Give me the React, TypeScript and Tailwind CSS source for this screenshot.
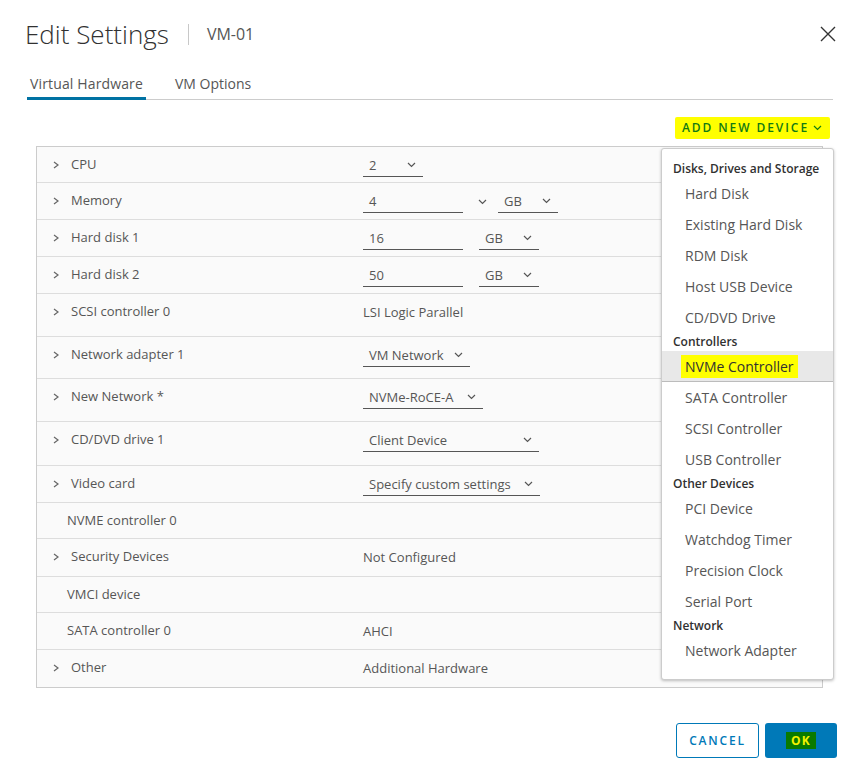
import React from 'react';

type Row = {
  label: string;
  h: number;
  expandable?: boolean;
  value?: React.ReactNode;
};

const ChevronRight = () => (
  <svg width="6" height="8" viewBox="0 0 6 8" className="shrink-0">
    <polyline points="1,1 5,4 1,7" fill="none" stroke="#666" strokeWidth="1.2" />
  </svg>
);

const ChevronDown = ({ color = '#565656' }: { color?: string }) => (
  <svg width="9" height="6" viewBox="0 0 9 6" className="shrink-0">
    <polyline points="1,1 4.5,4.5 8,1" fill="none" stroke={color} strokeWidth="1.2" />
  </svg>
);

// underlined select, value on the left and caret at the right edge
const Select: React.FC<{ text: string; w: string }> = ({ text, w }) => (
  <div className={`${w} flex items-center justify-between border-b border-[#565656] pl-[6px] pr-[7px] leading-[22px]`}>
    <span>{text}</span>
    <ChevronDown />
  </div>
);

const Input: React.FC<{ text: string }> = ({ text }) => (
  <div className="w-[100px] border-b border-[#565656] pl-[6px] leading-[22px]">{text}</div>
);

const rows: Row[] = [
  { label: 'CPU', h: 36, expandable: true, value: <Select text="2" w="w-[60px]" /> },
  {
    label: 'Memory',
    h: 37,
    expandable: true,
    value: (
      <div className="flex items-center">
        <Input text="4" />
        <div className="ml-[15px] mr-[11px] mt-[1px]">
          <ChevronDown />
        </div>
        <Select text="GB" w="w-[60px]" />
      </div>
    ),
  },
  {
    label: 'Hard disk 1',
    h: 37,
    expandable: true,
    value: (
      <div className="flex items-center gap-[16px]">
        <Input text="16" />
        <Select text="GB" w="w-[60px]" />
      </div>
    ),
  },
  {
    label: 'Hard disk 2',
    h: 37,
    expandable: true,
    value: (
      <div className="flex items-center gap-[16px]">
        <Input text="50" />
        <Select text="GB" w="w-[60px]" />
      </div>
    ),
  },
  { label: 'SCSI controller 0', h: 43, expandable: true, value: <span className="leading-[22px]">LSI Logic Parallel</span> },
  { label: 'Network adapter 1', h: 42, expandable: true, value: <Select text="VM Network" w="w-[107px]" /> },
  { label: 'New Network *', h: 43, expandable: true, value: <Select text="NVMe-RoCE-A" w="w-[120px]" /> },
  { label: 'CD/DVD drive 1', h: 44, expandable: true, value: <Select text="Client Device" w="w-[176px]" /> },
  { label: 'Video card', h: 37, expandable: true, value: <Select text="Specify custom settings" w="w-[177px]" /> },
  { label: 'NVME controller 0', h: 36 },
  { label: 'Security Devices', h: 38, expandable: true, value: <span className="leading-[22px]">Not Configured</span> },
  { label: 'VMCI device', h: 36 },
  { label: 'SATA controller 0', h: 37, value: <span className="leading-[22px]">AHCI</span> },
  { label: 'Other', h: 37, expandable: true, value: <span className="leading-[22px]">Additional Hardware</span> },
];

const rowHeights: Record<number, string> = {
  36: 'h-[36px]',
  37: 'h-[37px]',
  38: 'h-[38px]',
  42: 'h-[42px]',
  43: 'h-[43px]',
  44: 'h-[44px]',
};

type MenuEntry = { kind: 'header' | 'item'; text: string; active?: boolean };

const menu: MenuEntry[] = [
  { kind: 'header', text: 'Disks, Drives and Storage' },
  { kind: 'item', text: 'Hard Disk' },
  { kind: 'item', text: 'Existing Hard Disk' },
  { kind: 'item', text: 'RDM Disk' },
  { kind: 'item', text: 'Host USB Device' },
  { kind: 'item', text: 'CD/DVD Drive' },
  { kind: 'header', text: 'Controllers' },
  { kind: 'item', text: 'NVMe Controller', active: true },
  { kind: 'item', text: 'SATA Controller' },
  { kind: 'item', text: 'SCSI Controller' },
  { kind: 'item', text: 'USB Controller' },
  { kind: 'header', text: 'Other Devices' },
  { kind: 'item', text: 'PCI Device' },
  { kind: 'item', text: 'Watchdog Timer' },
  { kind: 'item', text: 'Precision Clock' },
  { kind: 'item', text: 'Serial Port' },
  { kind: 'header', text: 'Network' },
  { kind: 'item', text: 'Network Adapter' },
];

export default function App() {
  return (
    <div className="relative w-[858px] h-[780px] bg-white font-['Open_Sans',sans-serif] text-[#565656]">
      {/* title bar */}
      <div className="flex items-center justify-between pt-[19px] pl-[25px] pr-[22px] h-[49px]">
        <div className="flex items-center h-[30px]">
          <span className="text-[26px] leading-[30px] font-light text-[#313131]">Edit Settings</span>
          <span className="ml-[19px] h-[21px] w-px bg-[#c8c8c8]" />
          <span className="ml-[18px] text-[16px] text-[#565656]">VM-01</span>
        </div>
        <svg width="16" height="16" viewBox="0 0 16 16">
          <path d="M1 1 L15 15 M15 1 L1 15" stroke="#333" strokeWidth="1.4" fill="none" />
        </svg>
      </div>

      {/* tabs */}
      <div className="mt-[21px] ml-[27px] w-[806px] flex border-b border-[#ccc] text-[14px]">
        <div className="pl-[3px] pr-[3px] pt-[5px] pb-[4px] leading-[18px] border-b-[3px] border-[#0072a3] -mb-px text-[#565656] tracking-[0.01em]">
          Virtual Hardware
        </div>
        <div className="ml-[26px] px-[3px] pt-[5px] pb-[4px] leading-[18px] border-b-[3px] border-transparent -mb-px text-[#565656]">
          VM Options
        </div>
      </div>

      {/* add device action */}
      <div className="mt-[17px] flex justify-end pr-[28px]">
        <div className="h-[22px] flex items-center gap-[4px] bg-[#ffff00] pl-[7px] pr-[8px] rounded-[2px]">
          <span className="text-[12px] font-semibold tracking-[0.16em] text-[#127a14]">ADD NEW DEVICE</span>
          <ChevronDown color="#127a14" />
        </div>
      </div>

      {/* hardware list */}
      <div className="mt-[7px] ml-[36px] w-[787px] border border-[#ccc] bg-[#fafafa] text-[13px]">
        {rows.map((r, i) => (
          <div
            key={r.label}
            className={`${rowHeights[r.h]} flex items-start pt-[7px] ${i < rows.length - 1 ? 'border-b border-[#ddd]' : ''}`}
          >
            <div className={`w-[326px] flex items-center h-[22px] ${r.expandable ? 'pl-[16px]' : 'pl-[30px]'}`}>
              {r.expandable && <ChevronRight />}
              <span className={r.expandable ? 'ml-[12px]' : ''}>{r.label}</span>
            </div>
            <div className="flex items-center">{r.value}</div>
          </div>
        ))}
      </div>

      {/* footer */}
      <div className="mt-[35px] flex justify-end gap-[6px] pr-[21px]">
        <button className="w-[83px] h-[35px] rounded-[3px] border border-[#0079b8] text-[12px] font-semibold tracking-[0.15em] text-[#0079b8] bg-white">
          CANCEL
        </button>
        <button className="w-[72px] h-[35px] rounded-[3px] bg-[#0079b8] flex items-center justify-center">
          <span className="bg-[#0a7a00] px-[5px] leading-[17px] text-[12px] font-bold tracking-[0.1em] text-[#f2f200]">OK</span>
        </button>
      </div>

      {/* add device menu */}
      <div className="absolute left-[661px] top-[148px] w-[173px] h-[532px] bg-white border border-[#ccc] rounded-[3px] shadow-[0_1px_3px_rgba(0,0,0,0.25)] pt-[11px]">
        {menu.map((m) =>
          m.kind === 'header' ? (
            <div key={m.text} className="h-[18px] flex items-center pl-[11px] text-[12px] font-semibold text-[#313131] whitespace-nowrap">
              {m.text}
            </div>
          ) : (
            <div
              key={m.text}
              className={`h-[31px] flex items-center whitespace-nowrap text-[14px] ${
                m.active ? 'bg-[#e8e8e8] border-b border-[#bcbcbc] pl-[19px] text-[#313131]' : 'pl-[23px]'
              }`}
            >
              {m.active ? <span className="bg-[#ffff00] px-[4px] py-[1px]">{m.text}</span> : m.text}
            </div>
          )
        )}
      </div>
    </div>
  );
}
